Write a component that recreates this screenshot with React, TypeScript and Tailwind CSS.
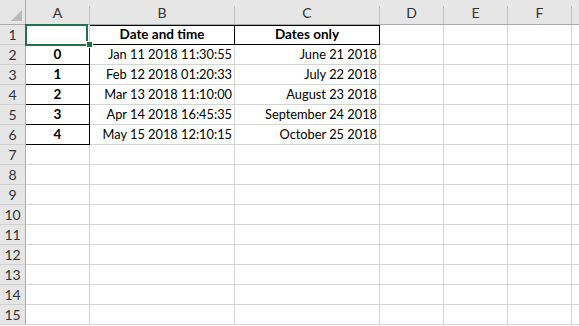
import React from "react";

const FONT = { fontFamily: "Lato, 'Open Sans', sans-serif" };

const cols = [
  { key: "A", w: "w-[64px]" },
  { key: "B", w: "w-[145px]" },
  { key: "C", w: "w-[145px]" },
  { key: "D", w: "w-[64px]" },
  { key: "E", w: "w-[64px]" },
  { key: "F", w: "w-[64px]" },
];

const data: [string, string, string][] = [
  ["0", "Jan 11 2018 11:30:55", "June 21 2018"],
  ["1", "Feb 12 2018 01:20:33", "July 22 2018"],
  ["2", "Mar 13 2018 11:10:00", "August 23 2018"],
  ["3", "Apr 14 2018 16:45:35", "September 24 2018"],
  ["4", "May 15 2018 12:10:15", "October 25 2018"],
];

function HeaderCell({ label, w }: { label: string; w: string }) {
  return (
    <div className={`${w} h-[25px] shrink-0 flex border-b border-[#ababab] bg-[#e6e6e6]`}>
      <div className="flex-1 flex items-center justify-center text-[14px] text-[#333] pt-[1px]">{label}</div>
      <div className="w-px h-[18px] self-end bg-[#c3c3c3]" />
    </div>
  );
}

export default function App() {
  const rows = Array.from({ length: 15 }, (_, i) => i + 1);
  return (
    <div className="relative w-[579px] h-[326px] bg-white overflow-hidden select-none" style={FONT}>
      {/* header row */}
      <div className="flex">
        <div className="w-[26px] h-[25px] shrink-0 bg-[#e6e6e6] border-b border-r border-[#ababab] flex items-end justify-end pr-[3px] pb-[3px]">
          <svg width="11" height="11" viewBox="0 0 11 11">
            <polygon points="11,0 11,11 0,11" fill="#b9b9b9" />
          </svg>
        </div>
        {cols.map((c) => (
          <HeaderCell key={c.key} label={c.key} w={c.w} />
        ))}
        <div className="flex-1 h-[25px] bg-[#e6e6e6] border-b border-[#ababab]" />
      </div>
      {rows.map((r) => {
        const d = r >= 2 && r <= 6 ? data[r - 2] : null;
        return (
          <div key={r} className="flex h-[20px]">
            <div className="w-[26px] shrink-0 bg-[#e6e6e6] border-r border-b border-[#ababab] border-b-[#d0d0d0] flex items-center justify-center text-[14px] text-[#333]">
              {r}
            </div>
            {/* A */}
            <div
              className={`w-[64px] shrink-0 border-r border-b flex items-center justify-center text-[13.5px] font-bold text-black ${
                d ? "border-black" : "border-[#d4d4d4]"
              } ${r === 1 ? "border-b-black" : ""}`}
            >
              {d ? d[0] : ""}
            </div>
            {/* B */}
            <div
              className={`w-[145px] shrink-0 border-r border-b flex items-center text-black ${
                r === 1
                  ? "border-black justify-center font-bold text-[13.5px] shadow-[inset_0_1px_0_#000]"
                  : "border-[#d4d4d4] justify-end pr-[2px] text-[12.8px]"
              }`}
            >
              {r === 1 ? "Date and time" : d ? d[1] : ""}
            </div>
            {/* C */}
            <div
              className={`w-[145px] shrink-0 border-r border-b flex items-center text-black ${
                r === 1
                  ? "border-black justify-center font-bold text-[13.5px] shadow-[inset_0_1px_0_#000]"
                  : "border-[#d4d4d4] justify-end pr-[2px] text-[12.8px]"
              }`}
            >
              {r === 1 ? "Dates only" : d ? d[2] : ""}
            </div>
            <div className="w-[64px] shrink-0 border-r border-b border-[#d4d4d4]" />
            <div className="w-[64px] shrink-0 border-r border-b border-[#d4d4d4]" />
            <div className="w-[64px] shrink-0 border-r border-b border-[#d4d4d4]" />
            <div className="flex-1 border-b border-[#d4d4d4]" />
          </div>
        );
      })}
      {/* selection of A1 */}
      <div className="absolute left-[25px] top-[24px] w-[63px] h-[22px] border-2 border-[#217346] pointer-events-none" />
      <div className="absolute left-[86px] top-[41px] w-[7px] h-[7px] bg-[#217346] border border-white pointer-events-none" />
    </div>
  );
}
